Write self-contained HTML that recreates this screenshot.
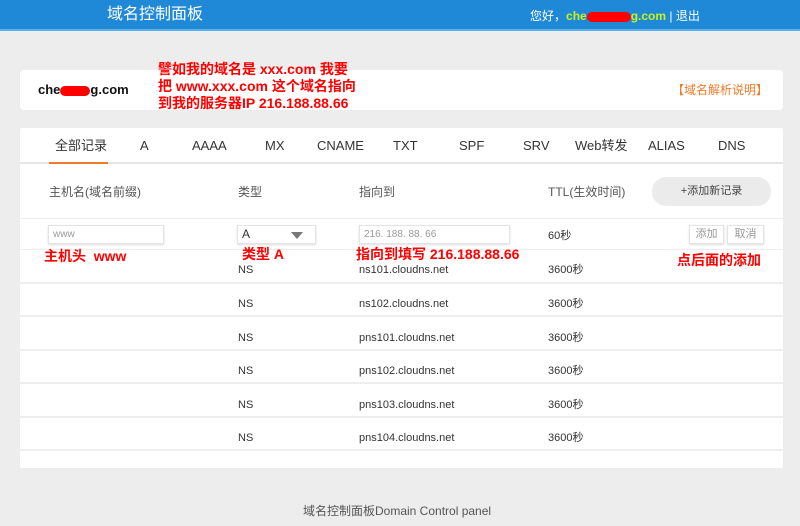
<!DOCTYPE html>
<html><head><meta charset="utf-8"><style>
*{margin:0;padding:0;box-sizing:border-box}
body{width:800px;height:526px;background:#ededed;font-family:"Liberation Sans","Noto Sans CJK SC",sans-serif;position:relative;overflow:hidden;color:#333}
.a{position:absolute;white-space:nowrap;line-height:16px}
.a .a{line-height:16px}
.hdr{position:absolute;left:0;top:0;width:800px;height:31px;background:#1f89d8;border-bottom:2px solid #5aaee8}
.card{position:absolute;background:#fff;border-radius:4px}
.red{color:#f00;font-weight:bold}
.s{font-size:11px;color:#333}
.sep{position:absolute;left:20px;width:763px;height:2px;background:#eeeeee}
.in{position:absolute;height:19px;background:#fff;border:1px solid #e4e4e4;box-shadow:0 1px 2px #ddd;font-size:10px;color:#999;padding:0 4px;line-height:17px}
</style></head><body>
<div class="hdr"></div>
<div class="a" style="left:107px;top:6px;font-size:16px;color:#fff;line-height:18px">域名控制面板</div>
<div class="a" style="left:530px;top:8px;font-size:12px;color:#fff">您好，<span style="color:#c6f21a;font-weight:bold">che<span style="display:inline-block;width:44px;height:10px;background:#f00;border-radius:5px;vertical-align:middle"></span>g.com</span> | 退出</div>

<div class="card" style="left:20px;top:70px;width:763px;height:40px"></div>
<div class="a" style="left:38px;top:82px;font-size:13px;color:#111;font-weight:bold">che<span style="display:inline-block;width:30px;height:10px;background:#f00;border-radius:5px;vertical-align:middle"></span>g.com</div>
<div class="a red" style="left:158px;top:61px;font-size:14px;line-height:17px">譬如我的域名是 xxx.com 我要<br>把 www.xxx.com 这个域名指向<br>到我的服务器IP 216.188.88.66</div>
<div class="a" style="left:672px;top:82px;font-size:12px;color:#f07a2a">【域名解析说明】</div>

<div class="card" style="left:20px;top:128px;width:763px;height:340px;border-radius:2px"></div>
<div style="position:absolute;left:20px;top:162px;width:763px;height:2px;background:#e6e6e6"></div>
<div style="position:absolute;left:49px;top:162px;width:59px;height:2px;background:#f07a2a"></div>
<div class="a" style="top:138px;font-size:13px;color:#333;left:0;width:800px">
<span class="a" style="left:55px">全部记录</span><span class="a" style="left:140px">A</span><span class="a" style="left:192px">AAAA</span><span class="a" style="left:265px">MX</span><span class="a" style="left:317px">CNAME</span><span class="a" style="left:393px">TXT</span><span class="a" style="left:459px">SPF</span><span class="a" style="left:523px">SRV</span><span class="a" style="left:575px">Web转发</span><span class="a" style="left:648px">ALIAS</span><span class="a" style="left:718px">DNS</span></div>

<div class="a" style="left:49px;top:184px;font-size:12px;color:#555">主机名(域名前缀)</div>
<div class="a" style="left:238px;top:184px;font-size:12px;color:#555">类型</div>
<div class="a" style="left:359px;top:184px;font-size:12px;color:#555">指向到</div>
<div class="a" style="left:548px;top:184px;font-size:12px;color:#555">TTL(生效时间)</div>
<div class="a" style="left:652px;top:177px;width:119px;height:29px;border-radius:14px;background:#ebebeb;font-size:11px;color:#444;text-align:center;line-height:29px">+添加新记录</div>
<div class="sep" style="top:218px;height:1px"></div>

<div class="in" style="left:48px;top:225px;width:116px">www</div>
<div class="in" style="left:237px;top:225px;width:79px;font-size:12px;color:#333">A<span style="position:absolute;right:12px;top:6px;border:6px solid transparent;border-top:7px solid #777;border-bottom:0"></span></div>
<div class="in" style="left:359px;top:225px;width:151px">216. 188. 88. 66</div>
<div class="a s" style="left:548px;top:228px">60秒</div>
<div class="in" style="left:689px;top:225px;width:35px;font-size:11px;text-align:center;padding:0">添加</div>
<div class="in" style="left:727px;top:225px;width:37px;font-size:11px;text-align:center;padding:0">取消</div>
<div class="sep" style="top:249px;height:1px"></div>

<div class="a red" style="left:44px;top:248px;font-size:14px">主机头&nbsp; www</div>
<div class="a red" style="left:242px;top:246px;font-size:14px">类型 A</div>
<div class="a red" style="left:356px;top:246px;font-size:14px">指向到填写 216.188.88.66</div>
<div class="a red" style="left:677px;top:252px;font-size:14px">点后面的添加</div>

<div class="a s" style="left:238px;top:262px">NS</div><div class="a s" style="left:359px;top:262px">ns101.cloudns.net</div><div class="a s" style="left:548px;top:262px">3600秒</div>
<div class="sep" style="top:282px"></div>
<div class="a s" style="left:238px;top:296px">NS</div><div class="a s" style="left:359px;top:296px">ns102.cloudns.net</div><div class="a s" style="left:548px;top:296px">3600秒</div>
<div class="sep" style="top:315px"></div>
<div class="a s" style="left:238px;top:330px">NS</div><div class="a s" style="left:359px;top:330px">pns101.cloudns.net</div><div class="a s" style="left:548px;top:330px">3600秒</div>
<div class="sep" style="top:349px"></div>
<div class="a s" style="left:238px;top:363px">NS</div><div class="a s" style="left:359px;top:363px">pns102.cloudns.net</div><div class="a s" style="left:548px;top:363px">3600秒</div>
<div class="sep" style="top:382px"></div>
<div class="a s" style="left:238px;top:397px">NS</div><div class="a s" style="left:359px;top:397px">pns103.cloudns.net</div><div class="a s" style="left:548px;top:397px">3600秒</div>
<div class="sep" style="top:416px"></div>
<div class="a s" style="left:238px;top:430px">NS</div><div class="a s" style="left:359px;top:430px">pns104.cloudns.net</div><div class="a s" style="left:548px;top:430px">3600秒</div>
<div class="sep" style="top:449px"></div>

<div class="a" style="left:303px;top:503px;font-size:12px;color:#555">域名控制面板Domain Control panel</div>
</body></html>
